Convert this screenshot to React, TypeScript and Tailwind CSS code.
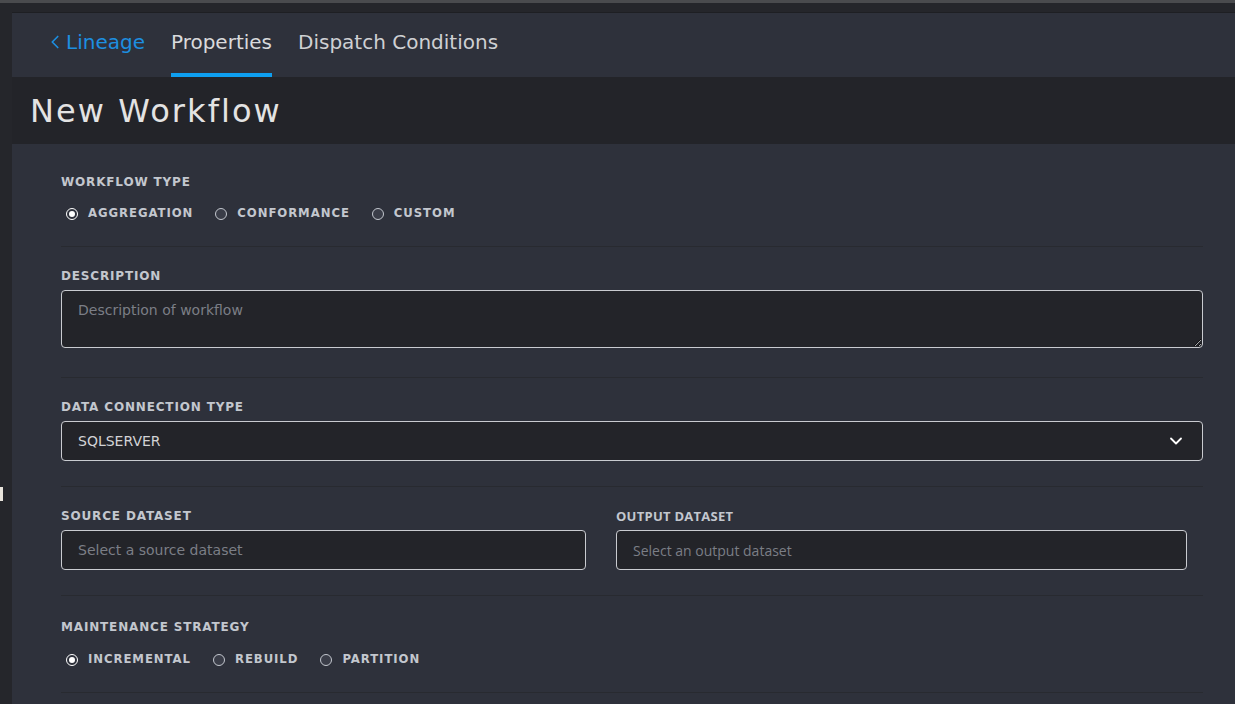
import React from 'react';
import { ChevronLeft, ChevronDown } from 'lucide-react';

const mainFont = "font-['DejaVu_Sans',sans-serif]";

const Label: React.FC<{ children: React.ReactNode; alt?: boolean }> = ({ children, alt }) => (
    <div
        className={
            alt
                ? "font-['Open_Sans',sans-serif] text-[13px] leading-4 font-bold tracking-[0.02em] text-[#c3c7ce]"
                : 'text-[12px] leading-4 font-bold tracking-[0.07em] text-[#c3c7ce]'
        }
    >
        {children}
    </div>
);

const Radio: React.FC<{ label: string; checked?: boolean }> = ({ label, checked }) => (
    <div className="flex items-center gap-[10px]">
        {checked ? (
            <span className="w-[12px] h-[12px] rounded-full border-[1.5px] border-white bg-[#2e313b] flex items-center justify-center">
                <span className="w-[6px] h-[6px] rounded-full bg-white" />
            </span>
        ) : (
            <span className="w-[12px] h-[12px] rounded-full border border-[#c3c7ce] bg-[#3a3d48]" />
        )}
        <span className="text-[11.7px] font-bold tracking-[0.08em] text-[#c3c7ce]">{label}</span>
    </div>
);

const RadioRow: React.FC<{ items: string[] }> = ({ items }) => (
    <div className="flex items-center gap-[22px] h-5 pl-[5px]">
        {items.map((item, i) => (
            <Radio key={item} label={item} checked={i === 0} />
        ))}
    </div>
);

const boxClass =
    'w-full h-10 rounded-[4px] border border-[#c9cbd0] bg-[#232429] px-4 flex items-center text-[14px]';

export default function App() {
    return (
        <div className={`min-h-screen bg-[#25262b] flex flex-col ${mainFont}`}>
            <div className="h-[3px] bg-[#4a4b4e]" />
            <div className="flex flex-1 pt-[10px]">
                <div className="w-[12px] shrink-0 flex flex-col">
                    <div className="h-[474px]" />
                    <div className="w-[3px] h-[14px] bg-[#e8e4dc]" />
                </div>
                <div className="flex-1 bg-[#2e313b] shadow-[0_-1px_0_#1e1f23]">
                    {/* tabs */}
                    <div className="h-[64px] flex items-stretch gap-[26px] pl-[32px] text-[20px]">
                        <div className="flex items-center pb-[3px] text-[#1d8fe1] border-b-4 border-transparent">
                            <ChevronLeft size={22} strokeWidth={1.8} className="text-[#1d8fe1]" />
                            <span>Lineage</span>
                        </div>
                        <div className="flex items-center pb-[3px] text-[#d9dadc] border-b-4 border-[#0e9ff0]">
                            Properties
                        </div>
                        <div className="flex items-center pb-[3px] text-[#cfd0d3] border-b-4 border-transparent">
                            Dispatch Conditions
                        </div>
                    </div>

                    {/* title */}
                    <div className="h-[67px] bg-[#232429] flex items-center pl-[18px]">
                        <h1 className="text-[32px] tracking-[0.065em] text-[#e3e3e3]">New Workflow</h1>
                    </div>

                    {/* form */}
                    <div className="pl-[49px] pr-[32px]">
                        <div className="pt-[30px] pb-[22px] border-b border-[#282a30]">
                            <Label>WORKFLOW TYPE</Label>
                            <div className="mt-[14px]">
                                <RadioRow items={['AGGREGATION', 'CONFORMANCE', 'CUSTOM']} />
                            </div>
                        </div>

                        <div className="pt-[21px] pb-[29px] border-b border-[#282a30]">
                            <Label>DESCRIPTION</Label>
                            <textarea
                                className="mt-[6px] block w-full h-[58px] rounded-[4px] border border-[#c9cbd0] bg-[#232429] px-4 py-[9px] text-[14px] text-[#d0d0d0] placeholder:text-[#7b7e86] outline-none"
                                placeholder="Description of workflow"
                            />
                        </div>

                        <div className="pt-[21px] pb-[25px] border-b border-[#282a30]">
                            <Label>DATA CONNECTION TYPE</Label>
                            <div className={`mt-[6px] ${boxClass} justify-between text-[#d2d3d6]`}>
                                <span>SQLSERVER</span>
                                <ChevronDown size={20} strokeWidth={2.2} className="text-white" />
                            </div>
                        </div>

                        <div className="pt-[21px] pb-[25px] border-b border-[#282a30] flex gap-[30px]">
                            <div className="w-[525px]">
                                <Label>SOURCE DATASET</Label>
                                <div className={`mt-[6px] ${boxClass} text-[#7b7e86]`}>Select a source dataset</div>
                            </div>
                            <div className="w-[571px]">
                                <Label alt>OUTPUT DATASET</Label>
                                <div className={`mt-[6px] ${boxClass} font-['Open_Sans',sans-serif] text-[#7b7e86]`}>
                                    Select an output dataset
                                </div>
                            </div>
                        </div>

                        <div className="pt-[23px] pb-[22px] border-b border-[#282a30]">
                            <Label>MAINTENANCE STRATEGY</Label>
                            <div className="mt-[15px]">
                                <RadioRow items={['INCREMENTAL', 'REBUILD', 'PARTITION']} />
                            </div>
                        </div>
                        <div className="h-10" />
                    </div>
                </div>
            </div>
        </div>
    );
}
